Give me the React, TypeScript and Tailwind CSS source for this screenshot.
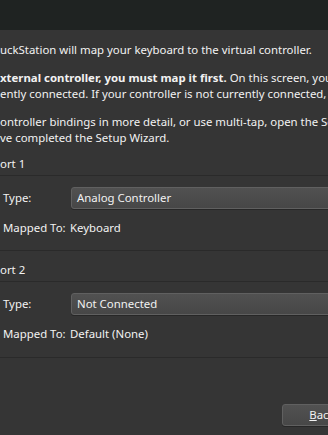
export default function App() {
  return (
    <div className="w-[328px] h-[435px] overflow-hidden bg-[#353535] text-[#f2f2f2] text-[11.4px] leading-[16px] font-['Segoe_UI','Noto_Sans',sans-serif]">
      {/* Title bar */}
      <div className="h-[30px] bg-[#1f2322]" />

      <div className="pt-[12px] whitespace-nowrap">
        <p>uckStation will map your keyboard to the virtual controller.</p>

        <p className="mt-[12px]">
          <span className="font-bold">xternal controller, you must map it first.</span> On this screen, you can
        </p>
        <p>ently connected. If your controller is not currently connected, you</p>

        <p className="mt-[12px]">ontroller bindings in more detail, or use multi-tap, open the Settings</p>
        <p>ve completed the Setup Wizard.</p>

        {/* Port 1 */}
        <p className="mt-[10px]">ort 1</p>
        <div className="mt-[3px] h-px bg-[#2a2a2a]" />
        <div className="mt-[11px] flex items-center h-[22px]">
          <span className="shrink-0 pl-[3px] w-[71px]">Type:</span>
          <div className="shrink-0 w-[280px] h-[22px] flex items-center pl-[5px] rounded-[3px] border border-[#606060] bg-gradient-to-b from-[#515151] to-[#474747] shadow-[0_1px_0_#272727]">
            Analog Controller
          </div>
        </div>
        <div className="mt-[11px] flex">
          <span className="shrink-0 pl-[3px] w-[70px]">Mapped To:</span>
          <span>Keyboard</span>
        </div>
        <div className="mt-[14px] h-px bg-[#2a2a2a]" />

        {/* Port 2 */}
        <p className="mt-[11px]">ort 2</p>
        <div className="mt-[3px] h-px bg-[#2a2a2a]" />
        <div className="mt-[11px] flex items-center h-[22px]">
          <span className="shrink-0 pl-[3px] w-[71px]">Type:</span>
          <div className="shrink-0 w-[280px] h-[22px] flex items-center pl-[5px] rounded-[3px] border border-[#606060] bg-gradient-to-b from-[#515151] to-[#474747] shadow-[0_1px_0_#272727]">
            Not Connected
          </div>
        </div>
        <div className="mt-[11px] flex">
          <span className="shrink-0 pl-[3px] w-[70px]">Mapped To:</span>
          <span>Default (None)</span>
        </div>
        <div className="mt-[15px] h-px bg-[#2a2a2a]" />

        {/* Buttons */}
        <div className="mt-[46px] pl-[282px] flex">
          <button className="shrink-0 w-[80px] h-[22px] rounded-[3px] border border-[#606060] bg-gradient-to-b from-[#515151] to-[#474747] shadow-[0_1px_0_#272727] text-center">
            <span className="underline">B</span>ack
          </button>
        </div>
      </div>
    </div>
  )
}
